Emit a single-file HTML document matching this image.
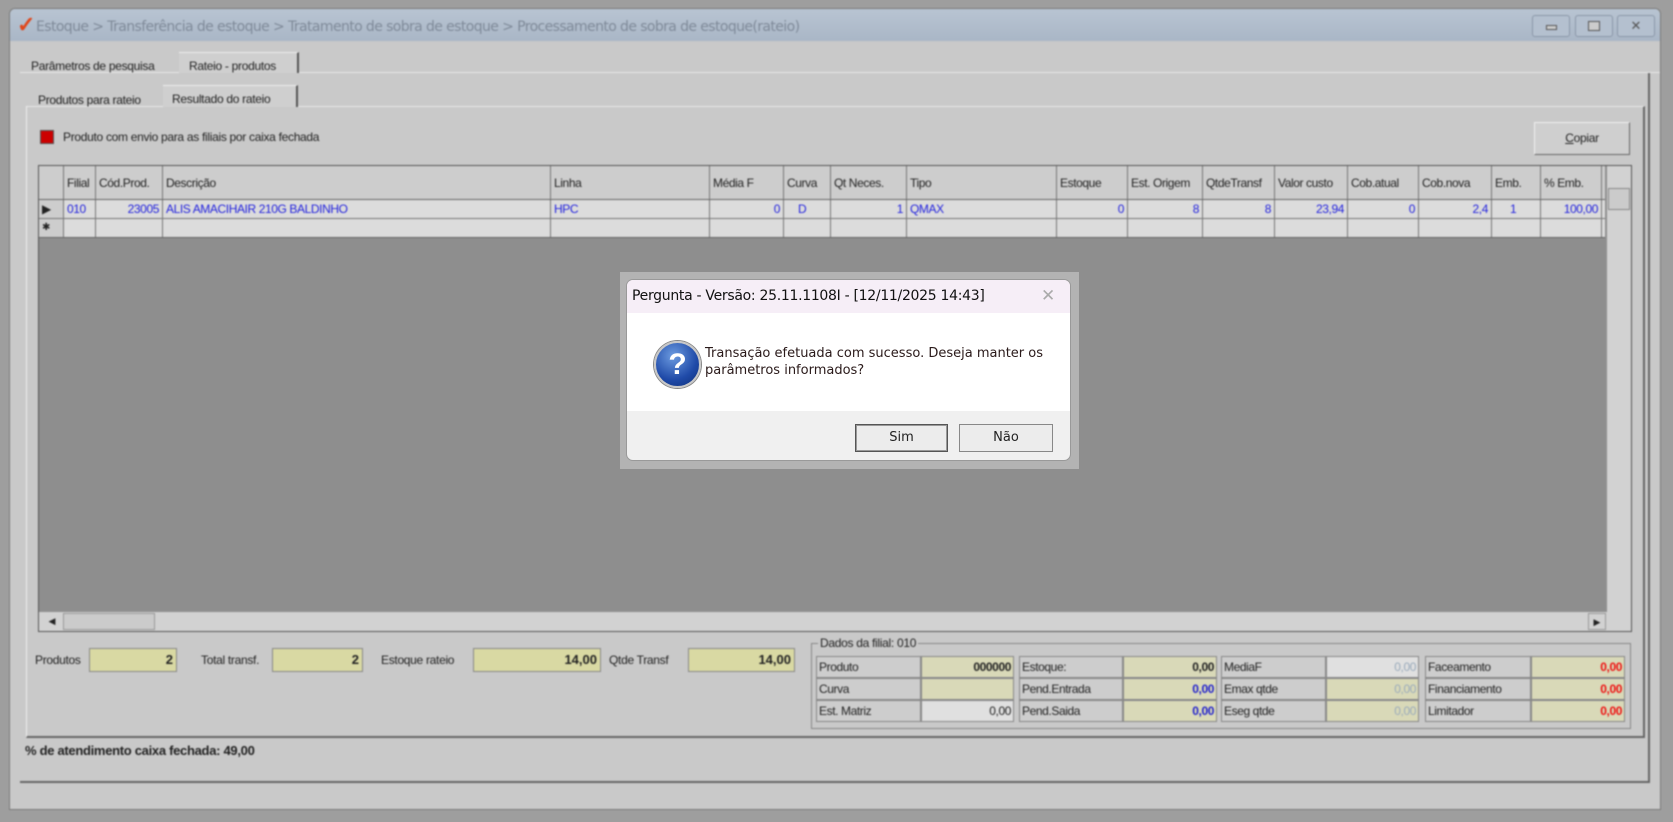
<!DOCTYPE html>
<html><head><meta charset="utf-8"><style>
*{box-sizing:border-box;margin:0;padding:0}
body{width:1673px;height:822px;background:#9e9e9e;position:relative;overflow:hidden;font-family:"Liberation Sans Narrow","Liberation Sans",sans-serif;font-size:12px;color:#222}
.a{position:absolute}
#bg{position:absolute;left:0;top:0;width:1673px;height:822px;filter:blur(0.8px)}
.win{left:9px;top:8px;width:1652px;height:802px;background:#c9c9c9;border:1px solid #7a7a7a;border-radius:6px 6px 0 0}
.tb{left:10px;top:9px;width:1650px;height:32px;background:linear-gradient(#b8c4d2,#a9b6c6);border-radius:5px 5px 0 0}
.ttl{left:36px;top:19px;color:#7f8a99;font-size:14px;font-family:"DejaVu Sans",sans-serif;letter-spacing:-0.6px}
.wb{top:15px;width:38px;height:22px;border:1px solid #8a97a8;border-radius:3px;background:#b4c0cf}
.t{font-size:12px;letter-spacing:-0.3px;white-space:nowrap}
.cell{position:absolute;border-right:1px solid #777;height:100%;padding:0 3px;line-height:18px;white-space:nowrap;overflow:hidden;letter-spacing:-0.4px}
.hdr .cell{line-height:34px}
.r{text-align:right}
.blue{color:#2222dd}
.fld{background:#d9d9a3;border:1px solid #888;height:24px;text-align:right;font-weight:bold;padding-right:3px;line-height:22px;font-size:13px}
.gc{position:absolute;height:22px;border:1px solid #888;line-height:20px;padding:0 2px;white-space:nowrap;letter-spacing:-0.4px}
</style></head><body>
<div id="bg">
<div class="a win"></div>
<div class="a tb"></div>
<div class="a" style="left:17px;top:14px;color:#e0461a;font-size:22px;font-weight:bold;line-height:22px">✓</div>
<div class="a ttl">Estoque &gt; Transferência de estoque &gt; Tratamento de sobra de estoque &gt; Processamento de sobra de estoque(rateio)</div>
<div class="a wb" style="left:1532px"><div class="a" style="left:13px;top:9px;width:11px;height:5px;border:1px solid #555;background:#ccc"></div></div>
<div class="a wb" style="left:1575px"><div class="a" style="left:12px;top:5px;width:12px;height:10px;border:1px solid #555;background:#ccc"></div></div>
<div class="a wb" style="left:1617px;text-align:center;line-height:20px;color:#555;font-size:13px">✕</div>
<!-- tabs -->
<div class="a" style="left:20px;top:72px;width:1640px;height:1px;background:#e8e8e8"></div>
<div class="a t" style="left:31px;top:59px">Parâmetros de pesquisa</div>
<div class="a" style="left:179px;top:52px;width:120px;height:21px;background:#cfcfcf;border-right:2px solid #555;border-top:1px solid #eee"></div>
<div class="a t" style="left:189px;top:59px">Rateio - produtos</div>
<div class="a" style="left:26px;top:106px;width:1619px;height:632px;border-left:1px solid #eee;border-right:2px solid #666;border-top:1px solid #e8e8e8;border-bottom:2px solid #666"></div>
<div class="a t" style="left:38px;top:93px">Produtos para rateio</div>
<div class="a" style="left:163px;top:85px;width:135px;height:22px;background:#cfcfcf;border-right:2px solid #555;border-top:1px solid #eee"></div>
<div class="a t" style="left:172px;top:92px">Resultado do rateio</div>
<div class="a" style="left:20px;top:73px;width:1630px;height:710px;border-right:2px solid #666;border-bottom:2px solid #666"></div>
<div class="a" style="left:40px;top:130px;width:14px;height:14px;background:#c00;border:1px solid #555"></div>
<div class="a t" style="left:63px;top:130px">Produto com envio para as filiais por caixa fechada</div>
<div class="a" style="left:1534px;top:122px;width:96px;height:33px;background:#cfcfcf;border:1px solid #f0f0f0;border-right-color:#666;border-bottom-color:#666;text-align:center;line-height:31px" ><span class="t"><u>C</u>opiar</span></div>
<!-- grid -->
<div class="a" style="left:38px;top:165px;width:1594px;height:467px;background:#8e8e8e;border:1px solid #555"></div>
<div class="a hdr" style="left:39px;top:166px;width:1566px;height:34px;background:#cdcdcd;border-bottom:1px solid #666">
<div class="cell" style="left:0;width:25px"></div>
<div class="cell" style="left:25px;width:32px">Filial</div>
<div class="cell" style="left:57px;width:67px">Cód.Prod.</div>
<div class="cell" style="left:124px;width:388px">Descrição</div>
<div class="cell" style="left:512px;width:159px">Linha</div>
<div class="cell" style="left:671px;width:74px">Média F</div>
<div class="cell" style="left:745px;width:47px">Curva</div>
<div class="cell" style="left:792px;width:76px">Qt Neces.</div>
<div class="cell" style="left:868px;width:150px">Tipo</div>
<div class="cell" style="left:1018px;width:71px">Estoque</div>
<div class="cell" style="left:1089px;width:75px">Est. Origem</div>
<div class="cell" style="left:1164px;width:72px">QtdeTransf</div>
<div class="cell" style="left:1236px;width:73px">Valor custo</div>
<div class="cell" style="left:1309px;width:71px">Cob.atual</div>
<div class="cell" style="left:1380px;width:73px">Cob.nova</div>
<div class="cell" style="left:1453px;width:49px">Emb.</div>
<div class="cell" style="left:1502px;width:61px">% Emb.</div>
</div>
<div class="a" style="left:39px;top:200px;width:1566px;height:19px;background:#dcdcdc;border-bottom:1px solid #777">
<div class="cell" style="left:0;width:25px;background:#cdcdcd">▶</div>
<div class="cell blue" style="left:25px;width:32px">010</div>
<div class="cell blue r" style="left:57px;width:67px">23005</div>
<div class="cell blue" style="left:124px;width:388px">ALIS AMACIHAIR 210G BALDINHO</div>
<div class="cell blue" style="left:512px;width:159px">HPC</div>
<div class="cell blue r" style="left:671px;width:74px">0</div>
<div class="cell blue" style="left:745px;width:47px;padding-left:14px">D</div>
<div class="cell blue r" style="left:792px;width:76px">1</div>
<div class="cell blue" style="left:868px;width:150px">QMAX</div>
<div class="cell blue r" style="left:1018px;width:71px">0</div>
<div class="cell blue r" style="left:1089px;width:75px">8</div>
<div class="cell blue r" style="left:1164px;width:72px">8</div>
<div class="cell blue r" style="left:1236px;width:73px">23,94</div>
<div class="cell blue r" style="left:1309px;width:71px">0</div>
<div class="cell blue r" style="left:1380px;width:73px">2,4</div>
<div class="cell blue" style="left:1453px;width:49px;padding-left:18px">1</div>
<div class="cell blue r" style="left:1502px;width:61px">100,00</div>
</div>
<div class="a" style="left:39px;top:219px;width:1566px;height:19px;background:#dcdcdc;border-bottom:1px solid #666">
<div class="cell" style="left:0;width:25px;background:#cdcdcd;font-size:10px">✱</div>
<div class="cell" style="left:25px;width:32px"></div><div class="cell" style="left:57px;width:67px"></div><div class="cell" style="left:124px;width:388px"></div><div class="cell" style="left:512px;width:159px"></div><div class="cell" style="left:671px;width:74px"></div><div class="cell" style="left:745px;width:47px"></div><div class="cell" style="left:792px;width:76px"></div><div class="cell" style="left:868px;width:150px"></div><div class="cell" style="left:1018px;width:71px"></div><div class="cell" style="left:1089px;width:75px"></div><div class="cell" style="left:1164px;width:72px"></div><div class="cell" style="left:1236px;width:73px"></div><div class="cell" style="left:1309px;width:71px"></div><div class="cell" style="left:1380px;width:73px"></div><div class="cell" style="left:1453px;width:49px"></div><div class="cell" style="left:1502px;width:61px"></div>
</div>
<div class="a" style="left:1607px;top:166px;width:24px;height:446px;background:#d2d2d2"></div>
<div class="a" style="left:1608px;top:188px;width:22px;height:22px;background:#cbcbcb;border:1px solid #888"></div>
<div class="a" style="left:39px;top:612px;width:1592px;height:19px;background:#d2d2d2"></div>
<div class="a" style="left:42px;top:613px;width:20px;height:17px;font-size:9px;line-height:17px;text-align:center">◀</div>
<div class="a" style="left:63px;top:613px;width:92px;height:17px;background:#cbcbcb;border:1px solid #999"></div>
<div class="a" style="left:1588px;top:613px;width:18px;height:17px;font-size:9px;line-height:17px;text-align:center;border:1px solid #999">▶</div>
<!-- totals -->
<div class="a t" style="left:35px;top:653px">Produtos</div><div class="a fld" style="left:89px;top:648px;width:88px">2</div>
<div class="a t" style="left:201px;top:653px">Total transf.</div><div class="a fld" style="left:272px;top:648px;width:91px">2</div>
<div class="a t" style="left:381px;top:653px">Estoque rateio</div><div class="a fld" style="left:473px;top:648px;width:128px">14,00</div>
<div class="a t" style="left:609px;top:653px">Qtde Transf</div><div class="a fld" style="left:688px;top:648px;width:107px">14,00</div>
<!-- group -->
<div class="a" style="left:811px;top:643px;width:820px;height:86px;border:1px solid #888"></div>
<div class="a t" style="left:818px;top:636px;background:#c9c9c9;padding:0 2px">Dados da filial: 010</div>
<div class="gc" style="left:816px;top:656px;width:105px;background:#cdcdcd">Produto</div><div class="gc r" style="left:921px;top:656px;width:93px;background:#d9d9b8;font-weight:bold">000000</div>
<div class="gc" style="left:816px;top:678px;width:105px;background:#cdcdcd">Curva</div><div class="gc" style="left:921px;top:678px;width:93px;background:#d9d9b8"></div>
<div class="gc" style="left:816px;top:700px;width:105px;background:#cdcdcd">Est. Matriz</div><div class="gc r" style="left:921px;top:700px;width:93px;background:#e0e0e0">0,00</div>
<div class="gc" style="left:1019px;top:656px;width:104px;background:#cdcdcd">Estoque:</div><div class="gc r" style="left:1123px;top:656px;width:94px;background:#d9d9b8;font-weight:bold">0,00</div>
<div class="gc" style="left:1019px;top:678px;width:104px;background:#cdcdcd">Pend.Entrada</div><div class="gc r" style="left:1123px;top:678px;width:94px;background:#d9d9b8;font-weight:bold;color:#22c">0,00</div>
<div class="gc" style="left:1019px;top:700px;width:104px;background:#cdcdcd">Pend.Saida</div><div class="gc r" style="left:1123px;top:700px;width:94px;background:#d9d9b8;font-weight:bold;color:#22c">0,00</div>
<div class="gc" style="left:1221px;top:656px;width:105px;background:#cdcdcd">MediaF</div><div class="gc r" style="left:1326px;top:656px;width:93px;background:#e0e0e0;color:#9ab">0,00</div>
<div class="gc" style="left:1221px;top:678px;width:105px;background:#cdcdcd">Emax qtde</div><div class="gc r" style="left:1326px;top:678px;width:93px;background:#d9d9b8;color:#9ab">0,00</div>
<div class="gc" style="left:1221px;top:700px;width:105px;background:#cdcdcd">Eseg qtde</div><div class="gc r" style="left:1326px;top:700px;width:93px;background:#d9d9b8;color:#9ab">0,00</div>
<div class="gc" style="left:1425px;top:656px;width:106px;background:#cdcdcd">Faceamento</div><div class="gc r" style="left:1531px;top:656px;width:94px;background:#d9d9b8;font-weight:bold;color:#e11">0,00</div>
<div class="gc" style="left:1425px;top:678px;width:106px;background:#cdcdcd">Financiamento</div><div class="gc r" style="left:1531px;top:678px;width:94px;background:#d9d9b8;font-weight:bold;color:#e11">0,00</div>
<div class="gc" style="left:1425px;top:700px;width:106px;background:#cdcdcd">Limitador</div><div class="gc r" style="left:1531px;top:700px;width:94px;background:#d9d9b8;font-weight:bold;color:#e11">0,00</div>
<div class="a t" style="left:25px;top:743px;font-weight:bold;font-size:13px">% de atendimento caixa fechada: 49,00</div>
</div>
<!-- dialog -->
<div class="a" style="left:620px;top:272px;width:459px;height:197px;background:#b3b3b3"></div>
<div class="a" style="left:626px;top:279px;width:445px;height:182px;background:#f0f0f0;border:1px solid #999;border-radius:7px;overflow:hidden;font-family:'DejaVu Sans','Liberation Sans',sans-serif">
 <div class="a" style="left:0;top:0;width:445px;height:33px;background:#f6eef7"></div>
 <div class="a" style="left:5px;top:8px;font-size:14px;color:#111;letter-spacing:-0.3px">Pergunta - Versão: 25.11.1108I - [12/11/2025 14:43]</div>
 <div class="a" style="left:414px;top:6px;font-size:17px;color:#aaa">✕</div>
 <div class="a" style="left:0;top:33px;width:445px;height:98px;background:#fff"></div>
 <div class="a" style="left:27px;top:61px;width:47px;height:47px;border-radius:50%;background:radial-gradient(circle at 40% 30%,#6c9be0,#1f4aa8 60%,#0e2e78);border:2px solid #c8c8c8;box-shadow:0 0 0 1px #888;color:#fff;font-weight:bold;font-size:30px;text-align:center;line-height:43px;font-family:'Liberation Sans',sans-serif">?</div>
 <div class="a" style="left:78px;top:65px;font-size:13px;line-height:17px;color:#2a1a1a;width:360px">Transação efetuada com sucesso. Deseja manter os parâmetros informados?</div>
 <div class="a" style="left:228px;top:144px;width:93px;height:28px;border:1px solid #555;background:#ececec;box-shadow:inset 0 0 0 1px #999;text-align:center;line-height:26px;font-size:13px">Sim</div>
 <div class="a" style="left:332px;top:144px;width:94px;height:28px;border:1px solid #888;background:#ececec;text-align:center;line-height:26px;font-size:13px">Não</div>
</div>
</body></html>
